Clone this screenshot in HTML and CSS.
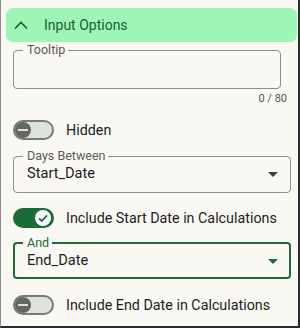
FILE: index.html
```html
<!DOCTYPE html>
<html lang="en">
  <head>
    <meta charset="UTF-8" />
    <meta name="viewport" content="width=device-width, initial-scale=1.0" />
    <link rel="stylesheet" href="styles.css">
    <title>Input Options</title>
  </head>
  <body>
    <div class="panel">
      <div class="panel-header">
        <svg class="chevron" width="14" height="8" viewBox="0 0 14 8">
          <polyline points="1,7.5 7,1.5 13,7.5" fill="none" stroke="currentColor" stroke-width="1.6" />
        </svg>
        <span class="panel-title">Input Options</span>
      </div>

      <div class="panel-body">
        <fieldset class="field field-text">
          <legend class="field-label">Tooltip</legend>
          <div class="field-value"></div>
        </fieldset>
        <div class="counter">0 / 80</div>

        <div class="toggle-row toggle-row-first">
          <span class="switch">
            <span class="switch-thumb"><span class="switch-minus"></span></span>
          </span>
          <span class="toggle-label">Hidden</span>
        </div>

        <fieldset class="field field-select">
          <legend class="field-label">Days Between</legend>
          <div class="field-value">
            <span>Start_Date</span>
            <span class="arrow"></span>
          </div>
        </fieldset>

        <div class="toggle-row">
          <span class="switch switch-on">
            <span class="switch-thumb">
              <svg width="12" height="12" viewBox="0 0 12 12">
                <polyline points="2,6.3 4.8,9 10,3.4" fill="none" stroke="currentColor" stroke-width="1.8" />
              </svg>
            </span>
          </span>
          <span class="toggle-label">Include Start Date in Calculations</span>
        </div>

        <fieldset class="field field-select field-focus">
          <legend class="field-label">And</legend>
          <div class="field-value">
            <span>End_Date</span>
            <span class="arrow"></span>
          </div>
        </fieldset>

        <div class="toggle-row toggle-row-last">
          <span class="switch">
            <span class="switch-thumb"><span class="switch-minus"></span></span>
          </span>
          <span class="toggle-label">Include End Date in Calculations</span>
        </div>
      </div>
    </div>
  </body>
</html>
```

FILE: styles.css
```css
html,
body {
  margin: 0;
  padding: 0;
}

body {
  font-family: Roboto, "Liberation Sans", sans-serif;
  color: #1d1d1b;
  background-color: #f9f8f3;
}

.panel {
  box-sizing: border-box;
  width: 300px;
  height: 328px;
  padding-top: 8px;

  background-color: #f9f8f3;
  border-left: 1px solid #8c8c8a;
  border-right: 2px solid #2b2b2b;
  border-bottom: 2px solid #2b2b2b;
}

.panel-header {
  display: flex;
  align-items: center;
  height: 34px;
  margin: 0 1px 0 5px;
  padding-left: 8px;

  background-color: #9ef6b6;
  color: #1c5a38;
  border-radius: 7px;
}

.chevron {
  display: block;
  margin-right: 16px;
}

.panel-title {
  font-size: 14px;
  line-height: 16px;
}

.panel-body {
  padding: 0 7px 0 12px;
}

.field {
  margin: 0;
  padding: 0 9px;
  min-width: 0;

  border: 1px solid #8e8e8b;
  border-radius: 4px;
}

.field-label {
  padding: 0 3px 0 4px;

  font-size: 12.5px;
  line-height: 14px;
  color: #5b5b58;
}

.field-text {
  margin: 1px 10px 0 0;
}

.field-text .field-value {
  height: 31px;
}

.counter {
  margin: 3px 4px 0 0;

  font-size: 11px;
  line-height: 14px;
  text-align: right;
  color: #55554f;
}

.field-select {
  margin-top: 9px;
}

.field-select .field-value {
  display: flex;
  justify-content: space-between;
  align-items: center;
  height: 18px;
  padding: 1px 0 10px 4px;

  font-size: 14.6px;
  line-height: 18px;
}

.arrow {
  width: 0;
  height: 0;
  margin: 3px 3px 0 0;

  border-left: 5px solid transparent;
  border-right: 5px solid transparent;
  border-top: 5px solid #3e3e3c;
}

.field-focus {
  margin-top: 8px;
  padding: 0 8px;
  border: 2px solid #1d6b3b;
}

.field-focus .field-label {
  color: #1d6b3b;
}

.field-focus .field-value {
  padding-bottom: 8px;
}

.field-focus .arrow {
  border-top-color: #1d6b3b;
}

.toggle-row {
  display: flex;
  align-items: center;
  gap: 12px;
  height: 20px;
  margin-top: 15px;
}

.toggle-row-first {
  margin-top: 14px;
}

.toggle-row-last {
  margin-top: 16px;
}

.switch {
  box-sizing: border-box;
  display: flex;
  align-items: center;
  width: 41px;
  height: 20px;
  padding: 0;

  background-color: #dde3da;
  border: 2px solid #767b73;
  border-radius: 10px;
}

.switch-thumb {
  display: flex;
  justify-content: center;
  align-items: center;
  width: 16px;
  height: 16px;

  background-color: #62685f;
  border-radius: 50%;
}

.switch-minus {
  width: 10px;
  height: 2px;
  background-color: #dde3da;
}

.switch-on {
  justify-content: flex-end;
  padding-right: 1px;

  background-color: #1b6b39;
  border-color: #1b6b39;
}

.switch-on .switch-thumb {
  background-color: #ffffff;
  color: #1b6b39;
}

.switch-on svg {
  display: block;
}

.toggle-label {
  font-size: 14.3px;
  line-height: 20px;
  white-space: nowrap;
}
```
